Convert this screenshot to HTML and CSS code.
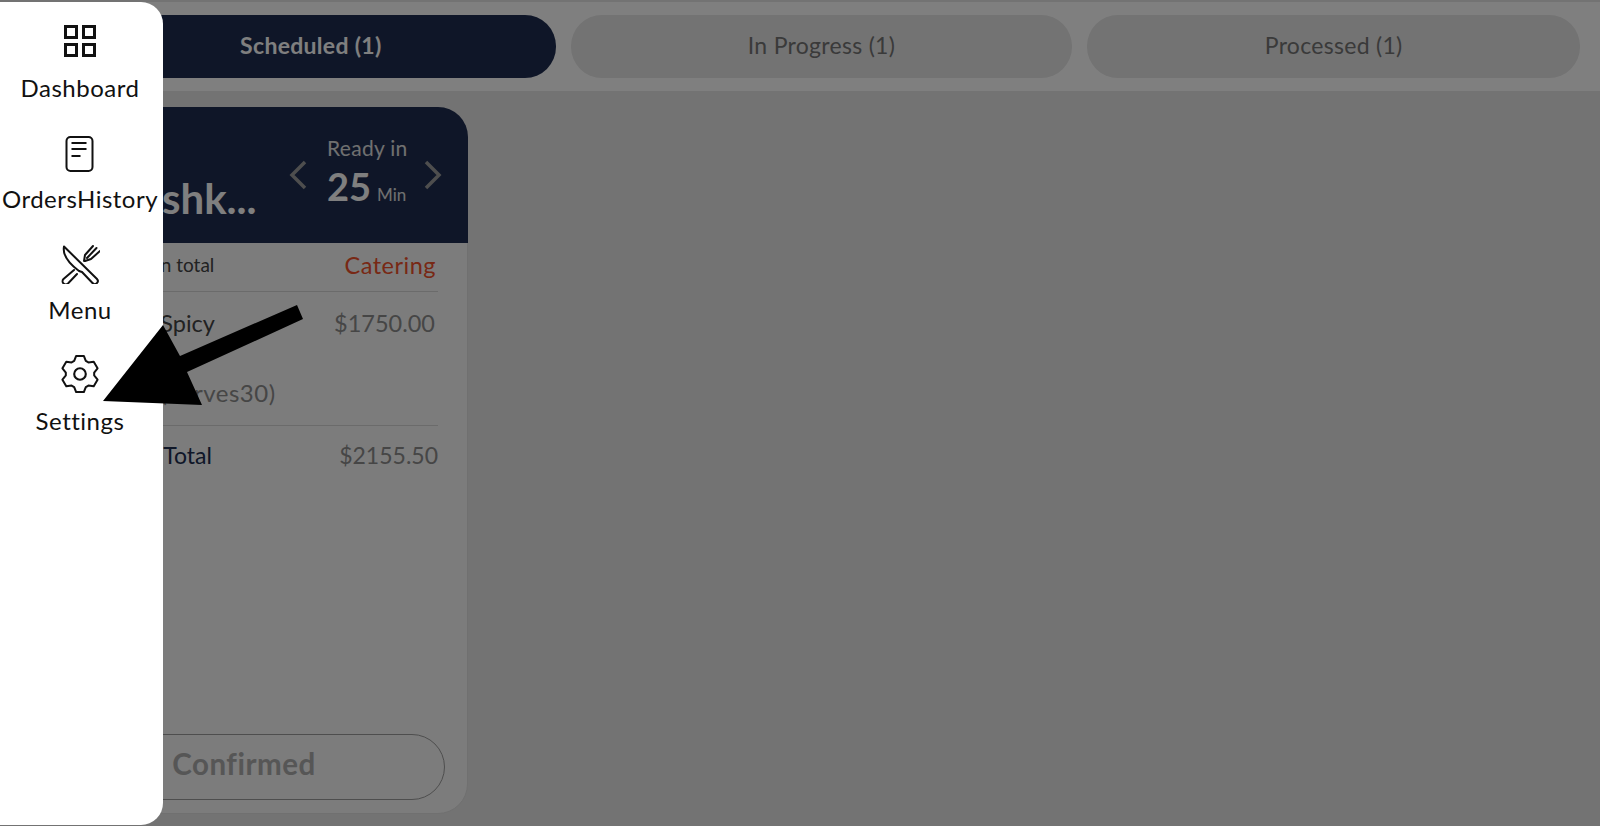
FILE: index.html
```html
<!DOCTYPE html>
<html>
<head>
    <title>Orders</title>
    <link rel="stylesheet" href="styles.css">
</head>
<body>
    <div class="page">
        <div class="tab-bar">
            <a href="#" class="tab tab-active">Scheduled (1)</a>
            <a href="#" class="tab tab-wide">In Progress (1)</a>
            <a href="#" class="tab tab-last">Processed (1)</a>
        </div>

        <div class="board">
            <div class="order-card">
                <div class="order-head">
                    <div class="order-name">Mushk...</div>
                    <svg class="chevron" viewBox="0 0 18 30"><path d="M16 2 3 15l13 13"/></svg>
                    <div class="ready">
                        <div class="ready-label">Ready in</div>
                        <div class="ready-time"><span class="ready-num">25</span><span class="ready-unit">Min</span></div>
                    </div>
                    <svg class="chevron" viewBox="0 0 18 30"><path d="M2 2l13 13L2 28"/></svg>
                </div>
                <div class="order-body">
                    <div class="row row-meta">
                        <span class="items-total">1 Item in total</span>
                        <span class="order-type">Catering</span>
                    </div>
                    <div class="row row-item">
                        <span class="item-name">Lamb Spicy</span>
                        <span class="price price-item">$1750.00</span>
                    </div>
                    <div class="item-note">1 Tray (Serves30)</div>
                    <div class="row row-total">
                        <span class="total-label">Order Total</span>
                        <span class="price">$2155.50</span>
                    </div>
                    <a href="#" class="status-btn">Confirmed</a>
                </div>
            </div>
        </div>
    </div>

    <div class="scrim"></div>

    <nav class="drawer">
        <a href="#" class="nav-item">
            <svg class="nav-icon" viewBox="0 0 34 34" width="34" height="34"><path d="M2.500 2.500h11v11h-11zM20.500 2.500h11v11h-11zM2.500 20.500h11v11h-11zM20.500 20.500h11v11h-11z" stroke-width="3"/></svg>
            <span>Dashboard</span>
        </a>
        <a href="#" class="nav-item">
            <svg class="nav-icon" viewBox="0 -2 34 38" width="34" height="38"><rect x="3.500" y="2" width="26" height="34" rx="4" stroke-width="2"/><path d="M8.500 8h15M8.500 14h15M8.500 21h9" stroke-width="1.800"/></svg>
            <span>OrdersHistory</span>
        </a>
        <a href="#" class="nav-item">
            <svg class="nav-icon" viewBox="10 7 40 42" width="40" height="42"><path d="M14 11.500 47 44a3 3 0 0 1-4.500 4L32 37l-3-1C21 30 12 22 14 11.500ZM24 35 13.500 44a3 3 0 0 0 4.500 4.500L27 39M34 26l1-6 8-9M50 16l-9 8-6 2M46.500 13 37 23" stroke-width="2" stroke-linejoin="round" stroke-linecap="round"/></svg>
            <span>Menu</span>
        </a>
        <a href="#" class="nav-item">
            <svg class="nav-icon" viewBox="0 0 36 36" width="38" height="38"><circle cx="18" cy="18" r="5.500" stroke-width="2"/><path d="M12.500 5.660 14.360.88h7.280l1.850 4.780 2.450 1.420 5.060-.79 3.640 6.300-3.210 4v2.820l3.210 4-3.640 6.300-5.060-.79-2.450 1.420-1.850 4.780h-7.280l-1.860-4.780-2.440-1.420-5.060.79-3.640-6.300 3.210-4v-2.820l-3.210-4 3.640-6.300 5.060.79Z" stroke-width="1.900" stroke-linejoin="round"/></svg>
            <span>Settings</span>
        </a>
    </nav>

    <!-- annotation arrow drawn on top of the screenshot -->
    <svg class="arrow" viewBox="0 0 1600 826" width="1600" height="826">
        <polygon points="103,401 163,325 180,356 297,305 303,319 187,372 202,405"/>
    </svg>
</body>
</html>
```

FILE: styles.css
```css
* {
    box-sizing: border-box;
}

body {
    margin: 0;
    height: 826px;
    overflow: hidden;
    background-color: #e6e6e6;
    color: #444;
    font-family: Lato, sans-serif;
}

a {
    color: inherit;
    text-decoration: none;
}

.page {
    display: flex;
    flex-direction: column;
    height: 826px;
}

.tab-bar {
    display: flex;
    gap: 15px;
    height: 91px;
    padding: 13px 20px 13px 66px;
    border-top: 2px solid #e6e6e6;
    background-color: #fff;
}

.tab {
    flex: 490 1 0;
    display: flex;
    align-items: center;
    justify-content: center;
    padding-bottom: 3px;
    border-radius: 31px;
    background-color: #e6e6e6;
    color: #747474;
    font-size: 23px;
    letter-spacing: 0.3px;
}

.tab-wide {
    flex-grow: 502;
}

.tab-last {
    flex-grow: 493;
}

.tab-active {
    background-color: #1e2c50;
    color: #fff;
    font-weight: 700;
}

.board {
    flex: 1;
    padding: 16px 0 12px 19px;
}

.order-card {
    display: flex;
    flex-direction: column;
    width: 449px;
    height: 100%;
    border: 1px solid #e0e0e0;
    border-radius: 30px;
    background-color: #f8f8f8;
}

.order-head {
    display: flex;
    align-items: center;
    height: 136px;
    margin: -1px -1px 0;
    padding: 0 26px 0 80px;
    border-radius: 30px 30px 0 0;
    background-color: #1e2c50;
    color: #fff;
}

.order-name {
    flex: 1;
    margin-top: 46px;
    font-size: 42px;
    font-weight: 700;
    white-space: nowrap;
}

.chevron {
    width: 18px;
    height: 30px;
    fill: none;
    stroke: #9c9c9c;
    stroke-width: 3.500;
}

.ready {
    width: 80px;
    margin: 0 17px 0 20px;
    white-space: nowrap;
}

.ready-label {
    margin-top: -6px;
    margin-bottom: 3px;
    font-size: 21px;
    letter-spacing: 0.3px;
    color: #e0e0e0;
}

.ready-num {
    font-size: 38px;
    font-weight: 700;
}

.ready-unit {
    margin-left: 6px;
    font-size: 17px;
    color: #e0e0e0;
}

.order-body {
    flex: 1;
    display: flex;
    flex-direction: column;
    padding: 0 22px 13px 23px;
}

.row {
    display: flex;
    justify-content: space-between;
    align-items: baseline;
    margin: 0 7px 0 58px;
}

.row-meta {
    height: 49px;
    padding-top: 8px;
    border-bottom: 1px solid #d6d6d6;
}

.items-total {
    align-self: flex-start;
    margin: 2px 0 0 -3px;
    font-size: 19px;
}

.order-type {
    margin-right: 2px;
    font-size: 23.500px;
    letter-spacing: 0.5px;
    color: #f0512a;
}

.row-item {
    padding-top: 17px;
    font-size: 23.500px;
}

.item-name {
    margin-left: -3px;
    color: #444;
}

.price {
    color: #8c8c8c;
}

.price-item {
    margin-right: 3px;
}

.item-note {
    height: 47px;
    margin: 0 7px 0 58px;
    padding-top: 41px;
    border-bottom: 1px solid #d6d6d6;
    font-size: 24px;
    letter-spacing: 0.5px;
    text-indent: -13px;
    color: #8c8c8c;
    white-space: nowrap;
    box-sizing: content-box;
}

.row-total {
    padding-top: 15px;
    font-size: 23px;
}

.total-label {
    margin-left: -2px;
    color: #202e50;
}

.status-btn {
    display: flex;
    align-items: center;
    justify-content: center;
    height: 66px;
    margin-top: auto;
    padding-bottom: 8px;
    border: 1px solid #9c9c9c;
    border-radius: 33px;
    font-size: 29.500px;
    font-weight: 700;
    letter-spacing: 0.5px;
    color: #acacac;
}

.scrim {
    position: absolute;
    inset: 0;
    background-color: rgba(0, 0, 0, 0.5);
}

.drawer {
    position: absolute;
    top: 2px;
    left: 0;
    bottom: 1px;
    display: flex;
    flex-direction: column;
    align-items: center;
    width: 163px;
    padding: 18px 3px 0 0;
    border-radius: 0 22px 22px 0;
    background-color: #fff;
    color: #111;
}

.nav-item {
    display: flex;
    flex-direction: column;
    align-items: center;
    height: 111px;
    font-size: 24px;
    letter-spacing: 0.5px;
    white-space: nowrap;
}

.nav-icon {
    height: 42px;
    margin-bottom: 11px;
    fill: none;
    stroke: #111;
}

.arrow {
    position: absolute;
    top: 0;
    left: 0;
}
```
